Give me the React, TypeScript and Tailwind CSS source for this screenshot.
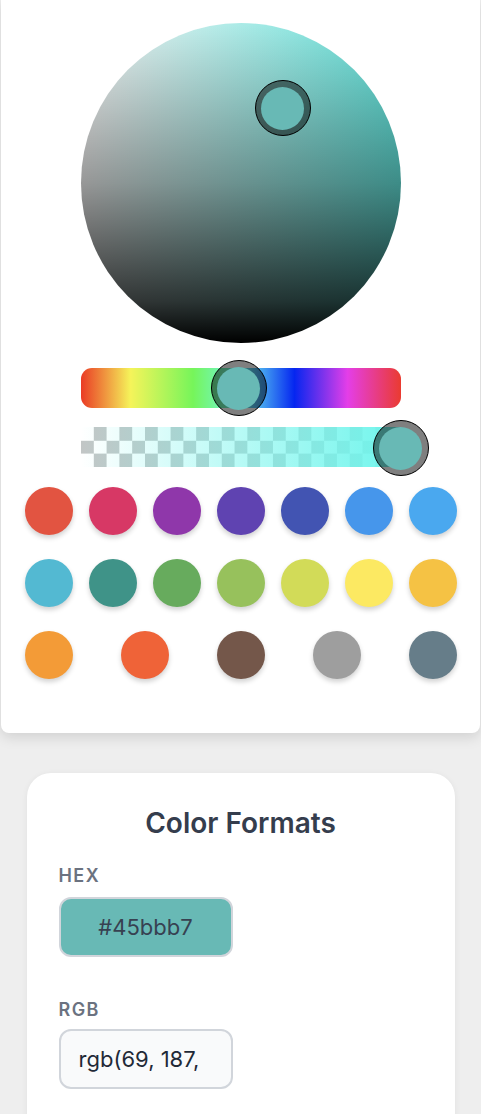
import React from "react";

const swatches = [
  "#e25441", "#d73865", "#8f37aa", "#5f43b1", "#4254b2", "#4696eb", "#4aa8ef",
  "#53b9d2", "#3f9388", "#67ab5d", "#97c15c", "#d2db58", "#fce962", "#f5c244",
  "#f39b37", "#ef6338", "#74574a", "#9e9e9e", "#667d89",
];

function Thumb({ className }: { className: string }) {
  return (
    <div
      className={
        "absolute w-14 h-14 rounded-full border-[1.5px] border-black bg-black/50 flex items-center justify-center " +
        className
      }
    >
      <div className="w-[43px] h-[43px] rounded-full bg-[#68b9b5]" />
    </div>
  );
}

export default function App() {
  return (
    <div
      className="min-h-screen bg-[#eeeeee] pb-10"
      style={{ fontFamily: "Inter, 'Noto Sans', 'Liberation Sans', sans-serif" }}
    >
      <div className="ml-px w-[479px] bg-white rounded-b-lg shadow-[0_4px_14px_rgba(0,0,0,0.13)] pt-[23px] pb-[54px]">
        {/* Saturation / value wheel */}
        <div
          className="relative mx-auto w-[320px] h-[320px] rounded-full bg-[linear-gradient(to_bottom,rgba(0,0,0,0)_0%,rgba(0,0,0,0.38)_50%,rgba(0,0,0,0.78)_87%,#000_100%),linear-gradient(to_right,#f4f4f4_0%,#62e2da_100%)]"
        >
          <Thumb className="left-[174px] top-[57px]" />
        </div>

        {/* Hue slider */}
        <div className="relative mx-auto mt-[25px] w-[320px] h-10 rounded-[11px] bg-[linear-gradient(to_right,#ea3b25_0%,#f5f45a_15.5%,#76f55a_35%,#6ff5f0_50%,#0526f0_66.7%,#e43ee8_83.3%,#ea3b30_100%)]">
          <Thumb className="left-[130px] top-[-8px]" />
        </div>

        {/* Alpha slider */}
        <div className="relative mx-auto mt-[19px] w-[320px] h-10">
          <div className="absolute inset-0 bg-[repeating-conic-gradient(#c2c6c6_0_25%,#ffffff_0_50%)] bg-[length:25.6px_26.6px]" />
          <div className="absolute inset-0 bg-[linear-gradient(to_right,rgba(111,245,236,0),rgba(111,245,236,1))]" />
          <Thumb className="left-[292px] top-[-7px]" />
        </div>

        {/* Swatches */}
        <div className="mx-auto mt-5 w-[432px] flex flex-wrap justify-between gap-x-4 gap-y-6">
          {swatches.map((c) => (
            <div
              key={c}
              className="w-12 h-12 rounded-full shadow-[0_3px_5px_rgba(0,0,0,0.18)]"
              style={{ backgroundColor: c }}
            />
          ))}
        </div>
      </div>

      {/* Color formats card */}
      <div className="mx-auto mt-10 w-[428px] bg-white rounded-3xl shadow-[0_1px_6px_rgba(0,0,0,0.06)] pt-[33px] px-8 pb-16">
        <h2 className="text-center text-[28px] leading-[34px] font-semibold text-[#353d4d]">
          Color Formats
        </h2>

        <div className="mt-6 text-[18px] leading-6 font-semibold tracking-[0.08em] text-[#6b7280]">
          HEX
        </div>
        <input
          readOnly
          value="#45bbb7"
          className="mt-[9px] block w-[174px] h-[60px] rounded-[12px] border-2 border-[#d1d5db] bg-[#68b9b5] px-[18px] text-center text-[22px] text-[#374151] outline-none"
        />

        <div className="mt-[41px] text-[18px] leading-6 font-semibold tracking-[0.08em] text-[#6b7280]">
          RGB
        </div>
        <input
          readOnly
          value="rgb(69, 187, 183)"
          className="mt-[7px] block w-[174px] h-[60px] rounded-[12px] border-2 border-[#d1d5db] bg-[#f9fafb] pl-[18px] pr-[30px] text-center text-[22px] text-[#1f2937] outline-none"
        />
      </div>
    </div>
  );
}
